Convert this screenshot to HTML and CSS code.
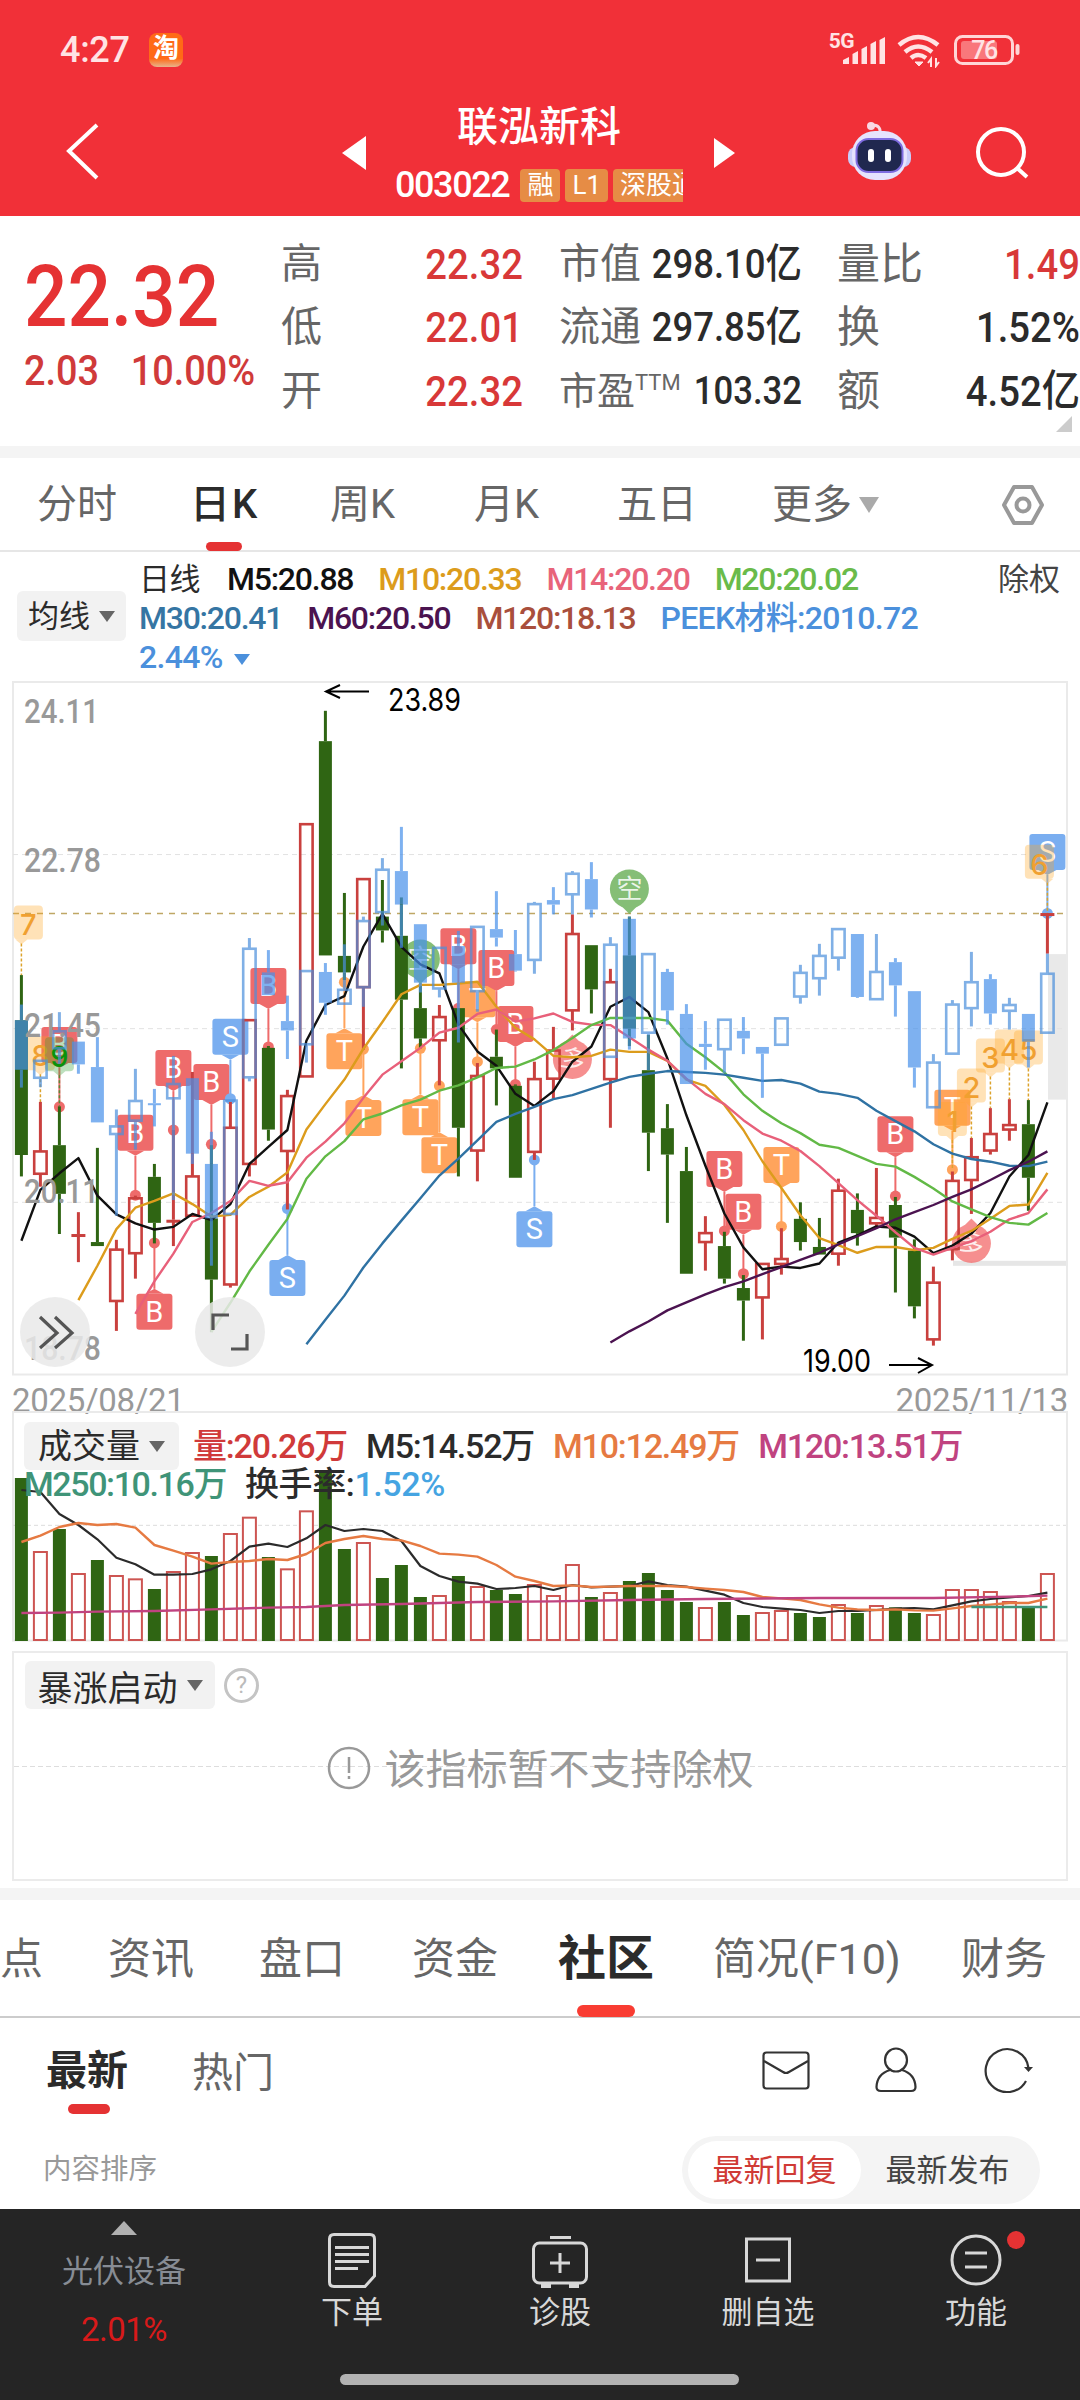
FILE: index.html
```html
<!DOCTYPE html>
<html lang="zh-CN">

<head>
    <meta charset="UTF-8">
    <meta name="viewport" content="width=device-width, initial-scale=1.0">
    <title>联泓新科 003022</title>
    <link rel="stylesheet" href="styles.css">
</head>

<body>
    <header class="header">
        <div class="status-bar">
            <span class="clock">4:27</span>
            <span class="app-icon">淘</span>
            <span class="network">5G</span>
            <svg class="signal" width="42" height="27" viewBox="0 0 42 27" fill="#ffe3e4">
                <path d="M0 27 V23 L6 20 V27z" />
                <path d="M9.500 27 V17 L15 14 V27z" />
                <path d="M18.500 27 V12 L24 9 V27z" />
                <path d="M27.500 27 V7 L33 4 V27z" />
                <path d="M36.500 27 V3 L42 0 V27z" />
            </svg>
            <svg class="wifi" width="44" height="34" viewBox="0 0 44 34" fill="none" stroke="#ffe3e4" stroke-width="4.500">
                <path d="M2 11 Q21 -5 41 11" />
                <path d="M8 18 Q21 7 35 18" />
                <path d="M14 24 Q21 18 29 24" />
                <path d="M18 28 H26 L22 32z" stroke-width="1" fill="#ffe3e4" />
                <path d="M34 33 V25 l-3 4 M39 24 V32 l3 -4" stroke-width="2" />
            </svg>
            <svg class="battery" width="66" height="31" viewBox="0 0 66 31">
                <rect x="1.500" y="1.500" width="57" height="27" rx="7" fill="none" stroke="#ffd5d6" stroke-width="3" />
                <rect x="7" y="6" width="36" height="18" rx="3" fill="#f9777b" />
                <path d="M63.500 11 v7" stroke="#ffd5d6" stroke-width="4" stroke-linecap="round" />
                <text x="30" y="23.500" text-anchor="middle" class="battery-text">76</text>
            </svg>
        </div>
        <div class="title-bar">
            <svg class="back" width="36" height="58" viewBox="0 0 36 58" fill="none" stroke="#fff" stroke-width="4">
                <path d="M32 3 L4 29 L32 56" />
            </svg>
            <svg class="prev" width="24" height="34" viewBox="0 0 24 34"><path d="M24 0 V34 L0 17z" fill="#fff" /></svg>
            <div class="stock">
                <h1>联泓新科</h1>
                <div class="stock-info">
                    <span class="code">003022</span>
                    <span class="badge">融</span>
                    <span class="badge">L1</span>
                    <span class="badge">深股通</span>
                </div>
            </div>
            <svg class="next" width="21" height="30" viewBox="0 0 21 30"><path d="M0 0 V30 L21 15z" fill="#fff" /></svg>
            <svg class="robot" width="66" height="62" viewBox="0 0 66 62">
                <path d="M33 13 q1 -8 -8 -8" fill="none" stroke="#f9d8e4" stroke-width="3" />
                <circle cx="24" cy="6" r="4" fill="#f9d8e4" />
                <rect x="1" y="27" width="63" height="20" rx="8" fill="#c9cdfa" />
                <rect x="5" y="11" width="55" height="49" rx="23" fill="#e6e3fd" />
                <rect x="9.500" y="19" width="46" height="33" rx="12" fill="#20284f" stroke="#7f6ce0" stroke-width="2" />
                <rect x="21" y="29" width="6" height="13" rx="3" fill="#fff" />
                <rect x="38" y="29" width="6" height="13" rx="3" fill="#fff" />
            </svg>
            <svg class="search" width="56" height="56" viewBox="0 0 56 56" fill="none" stroke="#fff" stroke-width="4">
                <circle cx="27" cy="27" r="23" />
                <path d="M43 43 L53 52" />
            </svg>
        </div>
    </header>

    <section class="quote">
        <div class="price">
            <div class="last">22.32</div>
            <div class="change"><span>2.03</span><span>10.00%</span></div>
        </div>
        <dl class="stats first">
            <dt>高</dt><dd class="up">22.32</dd>
            <dt>低</dt><dd class="up">22.01</dd>
            <dt>开</dt><dd class="up">22.32</dd>
        </dl>
        <dl class="stats second">
            <dt>市值</dt><dd>298.10亿</dd>
            <dt>流通</dt><dd>297.85亿</dd>
            <dt class="pe">市盈<sup>TTM</sup></dt><dd class="small">103.32</dd>
        </dl>
        <dl class="stats third">
            <dt>量比</dt><dd class="up">1.49</dd>
            <dt>换</dt><dd>1.52%</dd>
            <dt>额</dt><dd>4.52亿</dd>
        </dl>
        <span class="corner"></span>
    </section>

    <nav class="period-tabs">
        <span>分时</span>
        <span class="active">日K</span>
        <span>周K</span>
        <span>月K</span>
        <span>五日</span>
        <span>更多<i class="caret"></i></span>
        <svg width="44" height="42" viewBox="0 0 44 42" fill="none" stroke="#999" stroke-width="4">
            <path d="M13 3 H31 L41 21 L31 39 H13 L3 21z" stroke-linejoin="round" />
            <circle cx="22" cy="21" r="6.500" />
        </svg>
    </nav>

    <section class="ma-legend">
        <span class="picker">均线<i class="caret"></i></span>
        <div class="ma-rows">
            <div><span class="name">日线</span><span class="m5">M5:20.88</span><span class="m10">M10:20.33</span><span class="m14">M14:20.20</span><span class="m20">M20:20.02</span></div>
            <div><span class="m30">M30:20.41</span><span class="m60">M60:20.50</span><span class="m120">M120:18.13</span><span class="peek">PEEK材料:2010.72</span></div>
            <div><span class="peek">2.44%<i class="caret"></i></span></div>
        </div>
        <span class="adjust">除权</span>
    </section>

    <svg id="kline" width="1080" height="700" viewBox="0 0 1080 700"></svg>

    <section class="volume">
        <div class="dates"><span>2025/08/21</span><span>2025/11/13</span></div>
        <svg id="volume" width="1080" height="240" viewBox="0 0 1080 240"></svg>
        <div class="vol-legend">
            <div><span class="picker">成交量<i class="caret"></i></span><span class="vol">量:20.26万</span><span class="v5">M5:14.52万</span><span class="v10">M10:12.49万</span><span class="v120">M120:13.51万</span></div>
            <div><span class="v250">M250:10.16万</span><span class="turnover">换手率:<b>1.52%</b></span></div>
        </div>
    </section>

    <section class="indicator">
        <div class="indicator-head">
            <span class="picker">暴涨启动<i class="caret"></i></span>
            <span class="help">?</span>
        </div>
        <div class="empty">
            <svg width="44" height="44" viewBox="0 0 44 44" fill="none" stroke="#999" stroke-width="2.500">
                <circle cx="22" cy="22" r="20" />
                <path d="M22 11 V27 M22 30 V33" />
            </svg>
            <span>该指标暂不支持除权</span>
        </div>
    </section>

    <nav class="info-tabs">
        <span>点</span>
        <span>资讯</span>
        <span>盘口</span>
        <span>资金</span>
        <span class="active">社区</span>
        <span>简况(F10)</span>
        <span>财务</span>
    </nav>

    <section class="community">
        <div class="feed-tabs">
            <span class="active">最新</span>
            <span class="hot">热门</span>
            <svg class="mail" width="48" height="39" viewBox="0 0 48 39" fill="none" stroke="#333" stroke-width="2.200">
                <rect x="1.500" y="1.500" width="45" height="36" rx="3" />
                <path d="M2 10 L21 21 Q24 23 27 21 L46 10" />
            </svg>
            <svg class="person" width="42" height="46" viewBox="0 0 42 46" fill="none" stroke="#333" stroke-width="2.200">
                <ellipse cx="21" cy="13" rx="11" ry="11.500" />
                <path d="M15 23 Q2 27 1.500 40 Q1.500 44 6 44 H36 Q40.500 44 40.500 40 Q40 27 27 23" />
            </svg>
            <svg class="refresh" width="50" height="46" viewBox="0 0 50 46" fill="none" stroke="#333" stroke-width="2.200">
                <path d="M42 34 A21.500 21.500 0 1 1 44.500 21" />
                <path d="M40 20 H49 L44.500 25z" fill="#333" stroke="none" />
            </svg>
        </div>
        <div class="sort">
            <span>内容排序</span>
            <div class="switch"><span class="active">最新回复</span><span>最新发布</span></div>
        </div>
    </section>

    <footer class="toolbar">
        <div class="sector">
            <i class="caret-up"></i>
            <span>光伏设备</span>
            <b>2.01%</b>
        </div>
        <div class="tool">
            <svg width="60" height="60" viewBox="0 0 60 60" fill="none" stroke="#d8d8d8" stroke-width="3">
                <path d="M12 4.500 H48 Q52.500 4.500 52.500 9 V46 L43 56.500 H12 Q7.500 56.500 7.500 52 V9 Q7.500 4.500 12 4.500z" />
                <path d="M13 17.500 H47 M13 24.500 H47 M13 31.500 H47 M13 38.500 H36" />
            </svg>
            <span>下单</span>
        </div>
        <div class="tool">
            <svg width="60" height="60" viewBox="0 0 60 60" fill="none" stroke="#d8d8d8" stroke-width="3">
                <rect x="3.500" y="13" width="53" height="40" rx="6" />
                <path d="M20 7.500 H41 M30 23 V43 M20 33 H40" />
                <path d="M11 56 H21 M39 56 H49" stroke-width="4" />
            </svg>
            <span>诊股</span>
        </div>
        <div class="tool">
            <svg width="60" height="60" viewBox="0 0 60 60" fill="none" stroke="#d8d8d8" stroke-width="3">
                <rect x="8.500" y="9" width="43" height="42" />
                <path d="M18 30 H42" />
            </svg>
            <span>删自选</span>
        </div>
        <div class="tool">
            <svg width="60" height="60" viewBox="0 0 60 60" fill="none" stroke="#d8d8d8" stroke-width="3">
                <circle cx="30" cy="30" r="24" />
                <path d="M19 23 H41 M19 37 H41" />
            </svg>
            <span>功能</span>
            <i class="dot"></i>
        </div>
        <div class="home"></div>
    </footer>

    <script src="script.js"></script>
</body>

</html>
```
FILE: styles.css
```css
* {
    box-sizing: border-box;
}

body {
    margin: 0;
    width: 1080px;
    height: 2400px;
    overflow: hidden;
    background: #fff;
    color: #2b2b2b;
    font-family: Roboto, "Noto Sans CJK SC", sans-serif;
}

svg {
    display: block;
    flex: none;
}

i {
    font-style: normal;
}

b {
    font-weight: inherit;
}

/* header */
.header {
    height: 216px;
    background: #f13038;
    color: #fff;
}

.status-bar {
    height: 100px;
    padding: 0 60px;
    display: flex;
    align-items: center;
    color: #ffe3e4;
}

.clock {
    width: 89px;
    font-size: 36px;
    font-weight: 500;
    letter-spacing: -0.3px;
}

.app-icon {
    width: 34px;
    height: 34px;
    border-radius: 8px;
    background: linear-gradient(#ff6a16 75%, #e8b48c);
    color: #fff;
    font-size: 26px;
    font-weight: 700;
    line-height: 30px;
    text-align: center;
}

.network {
    margin-left: auto;
    margin-top: -18px;
    font-size: 21px;
    font-weight: 700;
    letter-spacing: -0.6px;
}

.signal {
    margin-left: -11px;
    margin-top: 1px;
}

.wifi {
    margin-left: 12px;
    margin-top: 2px;
}

.battery {
    margin-left: 13px;
}

.battery-text {
    font-size: 25px;
    font-weight: 500;
    fill: #ffe3e4;
    letter-spacing: -1.5px;
}

.title-bar {
    display: flex;
    height: 116px;
}

.back {
    margin: 22px 0 0 65px;
}

.prev {
    margin: 36px 0 0 241px;
}

.stock {
    width: 320px;
    height: 110px;
    margin-left: 15px;
    text-align: center;
}

.stock h1 {
    margin: 0;
    font-size: 41px;
    font-weight: 500;
    line-height: 54px;
    padding-right: 4px;
}

.stock-info {
    display: flex;
    align-items: center;
    gap: 5px;
    width: 288px;
    height: 38px;
    margin: 12px 0 0 14px;
    overflow: hidden;
}

.code {
    font-size: 36px;
    letter-spacing: -1.4px;
    margin-right: 6px;
    font-weight: 500;
}

.badge {
    flex: none;
    height: 33px;
    padding: 0 7px;
    border-radius: 4px;
    background: #e68c45;
    font-size: 26px;
    line-height: 32px;
}

.next {
    margin: 38px 0 0 13px;
}

.robot {
    margin: 20px 0 0 112px;
}

.search {
    margin: 25px 0 0 61px;
}

/* quote */
.quote {
    position: relative;
    display: flex;
    height: 242px;
    border-bottom: 12px solid #f4f4f4;
}

.price {
    width: 281px;
    padding: 38px 0 0 24px;
    color: #e53233;
}

.last {
    width: 220px;
    font-size: 86px;
    font-weight: 500;
    line-height: 86px;
    transform: scaleX(0.89);
    transform-origin: left;
}

.change {
    display: flex;
    gap: 36px;
    width: 270px;
    padding-top: 5px;
    font-size: 43px;
    line-height: 50px;
    font-weight: 500;
    color: #d03a3a;
    transform: scaleX(0.88);
    transform-origin: left;
}

.stats {
    display: grid;
    grid-template-columns: auto 1fr;
    grid-auto-rows: 63.5px;
    align-items: center;
    margin: 16px 0 0;
    height: 191px;
    font-size: 43px;
    line-height: 60px;
}

.first {
    width: 242px;
}

.second {
    width: 243px;
    margin-left: 36px;
}

.third {
    width: 243px;
    margin-left: 35px;
}

.stats dt {
    font-size: 41px;
    color: #666;
    white-space: nowrap;
}

.third dt {
    font-size: 43px;
}

.stats .pe {
    font-size: 38px;
    width: 60px;
}

.pe sup {
    font-size: 22px;
    line-height: 0;
    vertical-align: 14px;
}

.stats dd {
    margin: 0;
    text-align: right;
    font-size: 43px;
    font-weight: 500;
    white-space: nowrap;
    transform: scaleX(0.89);
    transform-origin: right;
}

.second dd {
    font-size: 41px;
    margin-left: -20px;
}

.stats .small {
    font-size: 39px;
}

.stats .up {
    color: #d83838;
}

.corner {
    position: absolute;
    right: 8px;
    bottom: 14px;
    width: 0;
    height: 0;
    border-left: 16px solid transparent;
    border-bottom: 16px solid #ccc;
}

.caret {
    display: inline-block;
    width: 0;
    height: 0;
    border: solid transparent;
    border-width: 11px 8px 0;
    border-top-color: #666;
}

/* period tabs */
.period-tabs {
    display: grid;
    grid-template-columns: 153px 140px 144px 143px 155px 229px auto;
    align-items: center;
    height: 94px;
    padding-left: 37px;
    border-bottom: 2px solid #e6e6e6;
    font-size: 40px;
    color: #666;
}

.period-tabs span {
    line-height: 94px;
    height: 93px;
    justify-self: start;
    white-space: nowrap;
}

.period-tabs .active {
    color: #2b2b2b;
    font-weight: 500;
    letter-spacing: 2px;
    display: flex;
    flex-direction: column;
}

.period-tabs .active::after {
    content: "";
    width: 36px;
    height: 9px;
    margin-top: -10px;
    margin-left: 16px;
    border-radius: 5px;
    background: #e53233;
}

.period-tabs .caret {
    border-width: 16px 10px 0;
    border-top-color: #aaa;
    margin-left: 7px;
    vertical-align: 5px;
}

.picker {
    display: inline-flex;
    align-items: center;
    justify-content: center;
    gap: 9px;
    height: 48px;
    border-radius: 6px;
    background: #f2f2f2;
    color: #2b2b2b;
    white-space: nowrap;
}

/* moving averages */
.ma-legend {
    display: flex;
    height: 128px;
    padding: 8px 20px 0 17px;
    font-size: 32px;
    line-height: 39px;
}

.ma-legend .picker {
    width: 109px;
    height: 50px;
    margin-top: 31px;
    font-size: 31px;
}

.ma-rows {
    flex: 1;
    padding-left: 13px;
    font-weight: 500;
    letter-spacing: -1.25px;
}

.ma-rows div {
    display: flex;
    height: 39px;
    gap: 25px;
}

.name {
    margin-right: 2px;
    font-size: 31px;
    font-weight: 400;
    letter-spacing: -0.5px;
}

.adjust {
    font-size: 31px;
    color: #444;
}

.m5 { color: #111; }
.m10 { color: #dc9c1c; }
.m14 { color: #e8647a; }
.m20 { color: #6abb4a; }
.m30 { color: #3575a3; }
.m60 { color: #4b1350; }
.m120 { color: #a94f3c; }

.peek {
    color: #4b90dc;
    letter-spacing: -0.7px;
}

.peek .caret {
    border-top-color: #4b90dc;
    margin-left: 11px;
    vertical-align: 3px;
}

/* volume */
.volume {
    position: relative;
    height: 269px;
}

.dates {
    display: flex;
    justify-content: space-between;
    height: 31px;
    padding: 2px 12px 0;
    font-size: 33px;
    line-height: 38px;
    color: #999;
    letter-spacing: -0.3px;
}

.vol-legend {
    position: absolute;
    left: 24px;
    top: 42px;
    font-size: 34px;
    font-weight: 500;
    letter-spacing: -1.2px;
    line-height: 38px;
}

.vol-legend div {
    display: flex;
    align-items: center;
    gap: 19px;
    height: 48px;
}

.vol-legend div + div {
    height: 28px;
}

.vol-legend .picker {
    width: 155px;
    margin-right: -5px;
    font-size: 34px;
    font-weight: 400;
    letter-spacing: 0;
}

.vol { color: #d03a3a; }
.v5 { color: #2b2b2b; }
.v10 { color: #e67a42; }
.v120 { color: #c04380; }

.v250 {
    color: #3f9478;
    letter-spacing: -1.4px;
}

.turnover {
    letter-spacing: -0.4px;
}

.turnover b { color: #45a4e2; }

/* unsupported indicator */
.indicator {
    height: 230px;
    margin: 2px 12px 7px;
    padding: 8px 11px;
    border: 2px solid #ebebeb;
    background: linear-gradient(90deg, #ddd 60%, transparent 0) 0 113px / 8px 1px repeat-x;
}

.indicator-head {
    display: flex;
    align-items: center;
    gap: 9px;
    height: 48px;
}

.indicator .picker {
    width: 190px;
    font-size: 35px;
}

.help {
    width: 35px;
    height: 35px;
    border: 3px solid #c4c4c4;
    border-radius: 50%;
    color: #bbb;
    font-size: 24px;
    line-height: 29px;
    text-align: center;
}

.empty {
    display: flex;
    justify-content: center;
    align-items: center;
    gap: 14px;
    margin-top: 29px;
    font-size: 41px;
    line-height: 56px;
    color: #999;
}

.empty span {
    padding-top: 4px;
}

/* info tabs */
.info-tabs {
    display: grid;
    grid-template-columns: 108px 151px 153px 146px 155px 248px auto;
    height: 130px;
    border-top: 12px solid #f4f4f4;
    border-bottom: 2px solid #ccc;
    font-size: 43px;
    line-height: 118px;
    color: #666;
    white-space: nowrap;
}

.info-tabs .active {
    font-size: 48px;
    font-weight: 700;
    color: #2b2b2b;
    width: 96px;
    display: flex;
    flex-direction: column;
    align-items: center;
}

.info-tabs .active::after {
    content: "";
    width: 58px;
    height: 12px;
    margin-top: -13px;
    border-radius: 6px;
    background: #f93c32;
}

/* community */
.community {
    height: 191px;
}

.feed-tabs {
    display: flex;
    align-items: center;
    height: 104px;
    padding: 0 46px;
    font-size: 41px;
    color: #666;
}

.feed-tabs .active {
    display: flex;
    flex-direction: column;
    align-items: center;
    margin-right: 64px;
    line-height: 60px;
    padding-top: 14px;
    font-weight: 700;
    color: #2b2b2b;
}

.feed-tabs .active::after {
    content: "";
    width: 42px;
    height: 10px;
    margin-top: 3px;
    margin-left: 3px;
    border-radius: 5px;
    background: #e53233;
}

.hot {
    padding-bottom: 2px;
}

.mail {
    margin-left: auto;
}

.person {
    margin-left: 65px;
}

.refresh {
    margin-left: 67px;
}

.sort {
    display: flex;
    justify-content: space-between;
    align-items: center;
    padding: 14px 40px 0 43px;
    font-size: 28.5px;
    line-height: 30px;
    color: #999;
}

.switch {
    display: flex;
    align-items: center;
    width: 358px;
    height: 68px;
    padding: 5px 6px;
    border-radius: 34px;
    background: #f4f4f4;
    font-size: 31px;
    color: #444;
}

.switch span {
    width: 173px;
    height: 58px;
    border-radius: 29px;
    line-height: 60px;
    text-align: center;
}

.switch .active {
    background: #fff;
    color: #d03a35;
}

/* toolbar */
.toolbar {
    position: relative;
    display: grid;
    grid-template-columns: 248px repeat(4, 208px);
    height: 191px;
    background: #252525;
    color: #d8d8d8;
    font-size: 31px;
}

.sector {
    display: flex;
    flex-direction: column;
    align-items: center;
    width: 248px;
    color: #878c94;
    line-height: 58px;
}

.caret-up {
    margin: 12px 0 8px;
    border: solid transparent;
    border-width: 0 13px 14px;
    border-bottom-color: #b0b0b0;
}

.sector b {
    color: #d81a1a;
    font-size: 33px;
    letter-spacing: -0.5px;
}

.tool {
    position: relative;
    display: flex;
    flex-direction: column;
    align-items: center;
    padding-top: 21px;
    line-height: 46px;
}

.dot {
    position: absolute;
    left: 135px;
    top: 22px;
    width: 18px;
    height: 18px;
    border-radius: 50%;
    background: #e53233;
}

.home {
    position: absolute;
    left: 340px;
    bottom: 15px;
    width: 399px;
    height: 11px;
    border-radius: 6px;
    background: #b3b3b3;
}

/* chart text */
.axis {
    font: 500 34px Roboto, sans-serif;
    fill: #999;
}

.mark {
    font: 400 31px Inter, sans-serif;
    fill: #000;
}

.tag-text {
    font: 400 29px Roboto, sans-serif;
    fill: #fff;
    text-anchor: middle;
}

.count {
    font: 500 29px Inter, sans-serif;
    fill: #f0a030;
    text-anchor: middle;
}

.count-green {
    fill: #0a930a;
}

.pin {
    font: 400 26px "Noto Sans CJK SC", sans-serif;
    fill: rgba(255, 255, 255, 0.85);
    text-anchor: middle;
}
```
FILE: script.js
```js
const STEP = 19;
const x = i => 21.4 + i * STEP;
const y = v => v * 700 / 1568;

// [type, high, bodyTop, bodyBottom, low], r = rise, g = fall
const candles = [
    ['g', 661, 762, 1064, 1112], ['r', 945, 1056, 1106, 1135], ['g', 955, 1042, 1151, 1241], ['r', 1192, 1241, 1246, 1304],
    ['g', 1048, 1259, 1268, 1268], ['r', 1254, 1276, 1391, 1458], ['r', 1155, 1161, 1284, 1341], ['g', 1084, 1113, 1216, 1262],
    ['r', 1008, 1209, 1213, 1268], ['r', 878, 1112, 1200, 1200], ['g', 1042, 1206, 1343, 1461], ['r', 945, 1003, 1354, 1361],
    ['r', 760, 762, 1084, 1112], ['g', 820, 824, 1007, 1032], ['r', 918, 932, 1055, 1186], ['r', 323, 323, 888, 888],
    ['g', 69, 137, 617, 617], ['g', 477, 618, 655, 672], ['r', 446, 446, 688, 828], ['g', 448, 530, 561, 588],
    ['g', 487, 573, 716, 870], ['g', 680, 735, 803, 825], ['r', 728, 755, 807, 908], ['g', 735, 735, 1003, 1112],
    ['r', 858, 887, 1054, 1123], ['g', 783, 844, 870, 953], ['g', 906, 909, 1115, 1115], ['r', 855, 894, 1057, 1075],
    ['r', 777, 830, 893, 938], ['r', 525, 569, 740, 785], ['g', 594, 594, 693, 747], ['r', 647, 677, 894, 1003],
    ['g', 530, 617, 781, 820], ['g', 795, 874, 1014, 1100], ['g', 950, 1004, 1063, 1216], ['g', 1046, 1100, 1330, 1330],
    ['r', 1201, 1239, 1259, 1323], ['g', 1236, 1268, 1341, 1352], ['g', 1333, 1362, 1390, 1480], ['r', 1307, 1308, 1383, 1477],
    ['r', 1228, 1297, 1308, 1332], ['g', 1170, 1207, 1259, 1278], ['g', 1205, 1270, 1287, 1287], ['r', 1117, 1144, 1285, 1312],
    ['g', 1150, 1187, 1239, 1267], ['r', 1093, 1205, 1217, 1225], ['g', 1158, 1176, 1249, 1372], ['g', 1253, 1278, 1403, 1430],
    ['r', 1314, 1350, 1477, 1491], ['r', 1101, 1122, 1275, 1300], ['r', 1026, 1069, 1120, 1196], ['r', 959, 1017, 1054, 1063],
    ['r', 939, 997, 1007, 1032], ['g', 941, 995, 1115, 1189], ['r', 523, 522, 527, 613]
];

// overlaid PEEK sector candles, h = hollow, f = filled
const sector = [
    ['f', 727, 762, 873, 913], ['h', 853, 853, 891, 912], ['h', 744, 787, 825, 860], ['f', 810, 810, 861, 882],
    ['f', 800, 867, 991, 991], ['h', 962, 1000, 1017, 1200], ['h', 871, 943, 987, 1052], ['f', 916, 948, 952, 1000],
    ['h', 842, 905, 937, 1165], ['f', 892, 892, 1061, 1084], ['f', 1012, 1084, 1206, 1312], ['h', 942, 942, 1196, 1196],
    ['h', 578, 602, 890, 899], ['f', 605, 655, 706, 706], ['f', 707, 764, 785, 849], ['h', 652, 652, 816, 857],
    ['f', 634, 654, 723, 750], ['h', 592, 694, 725, 725], ['h', 530, 540, 688, 732], ['h', 399, 425, 520, 550],
    ['f', 329, 428, 503, 600], ['f', 547, 547, 678, 700], ['h', 600, 600, 691, 711], ['f', 562, 596, 678, 812],
    ['h', 553, 553, 697, 743], ['f', 473, 558, 577, 597], ['f', 560, 614, 651, 653], ['h', 497, 502, 627, 658],
    ['f', 464, 493, 503, 525], ['h', 428, 434, 480, 525], ['f', 408, 446, 514, 532], ['h', 576, 593, 844, 844],
    ['f', 530, 535, 803, 828], ['h', 614, 614, 790, 874], ['f', 647, 654, 740, 772], ['f', 726, 748, 905, 905],
    ['f', 764, 815, 822, 873], ['h', 761, 761, 827, 880], ['f', 755, 786, 803, 838], ['f', 822, 822, 837, 936],
    ['h', 758, 758, 817, 817], ['h', 638, 656, 709, 725], ['h', 591, 618, 668, 707], ['h', 558, 558, 622, 651],
    ['f', 569, 569, 710, 712], ['h', 569, 654, 715, 715], ['f', 623, 632, 684, 754], ['f', 697, 697, 868, 913],
    ['h', 838, 857, 957, 957], ['h', 717, 727, 837, 837], ['h', 609, 677, 735, 776], ['f', 659, 670, 747, 772],
    ['h', 712, 728, 741, 783], ['f', 748, 748, 810, 868], ['h', 613, 658, 790, 790]
];

const averages = [
    { color: '#111', start: 0, values: [1256, 1142, 1105, 1071, 1155, 1197, 1217, 1231, 1225, 1196, 1210, 1174, 1084, 1046, 1008, 808, 728, 708, 597, 524, 598, 637, 657, 772, 832, 864, 927, 954, 921, 855, 821, 732, 710, 744, 848, 975, 1088, 1195, 1271, 1320, 1314, 1317, 1307, 1260, 1244, 1224, 1227, 1247, 1284, 1267, 1240, 1194, 1112, 1064, 946] },
    { color: '#dc9c1c', start: 3, values: [1389, 1312, 1230, 1182, 1167, 1150, 1174, 1202, 1198, 1158, 1135, 1103, 1007, 950, 895, 826, 766, 704, 683, 683, 680, 676, 732, 779, 805, 842, 845, 842, 828, 833, 833, 853, 895, 909, 952, 1008, 1078, 1138, 1199, 1250, 1266, 1283, 1270, 1270, 1277, 1272, 1252, 1234, 1207, 1178, 1175, 1104] },
    { color: '#e8607a', start: 6, values: [1420, 1347, 1285, 1214, 1194, 1167, 1122, 1133, 1125, 1070, 1034, 993, 936, 884, 854, 824, 790, 779, 748, 738, 765, 758, 747, 766, 772, 773, 800, 828, 853, 893, 927, 950, 986, 1016, 1032, 1055, 1089, 1127, 1165, 1200, 1237, 1272, 1287, 1272, 1257, 1236, 1208, 1194, 1141] },
    { color: '#62b946', start: 10, values: [1460, 1395, 1325, 1265, 1207, 1117, 1067, 1033, 984, 971, 953, 940, 920, 908, 890, 869, 866, 850, 829, 802, 773, 757, 757, 757, 763, 815, 845, 879, 928, 965, 993, 1015, 1041, 1048, 1066, 1084, 1090, 1113, 1139, 1168, 1186, 1203, 1216, 1220, 1194] },
    { color: '#2f72a3', start: 15, values: [1488, 1433, 1379, 1316, 1262, 1211, 1161, 1110, 1072, 1031, 990, 972, 956, 939, 930, 916, 902, 889, 882, 876, 878, 880, 884, 891, 898, 896, 904, 922, 927, 936, 965, 988, 1011, 1040, 1061, 1073, 1079, 1088, 1089, 1079] },
    { color: '#4b1350', start: 31, values: [1484, 1459, 1437, 1412, 1394, 1376, 1360, 1347, 1331, 1315, 1299, 1283, 1264, 1246, 1228, 1208, 1192, 1176, 1158, 1141, 1120, 1098, 1079, 1056] }
];

// [letter, index, box top, dot], box is below the candle when its top is under the dot
const tags = [
    ['B', 2, 777, 956], ['B', 6, 974, 1154], ['B', 7, 1375, 1261], ['B', 8, 829, 1008], ['B', 10, 860, 1040],
    ['S', 11, 759, 938], ['B', 13, 645, 822], ['S', 14, 1299, 1184], ['T', 17, 791, 677], ['T', 18, 941, 827],
    ['T', 21, 939, 825], ['T', 22, 1024, 909], ['B', 23, 556, 735], ['T', 24, 675, 855], ['B', 25, 605, 783],
    ['B', 26, 730, 906], ['S', 27, 1190, 1075], ['B', 37, 1055, 1234], ['B', 38, 1151, 1330], ['T', 40, 1046, 1224],
    ['B', 46, 977, 1156], ['T', 49, 918, 1097], ['S', 54, 345, 523]
];
const tagColors = { B: '#ee6b6b', S: '#7aaef0', T: '#ffa45c' };

// [text, index, box top, end of the dashed stem, x shift]
const counts = [
    ['7', 0, 505, 661, 7], ['8', 1, 798, 945, 0], ['9', 2, 800, 955, 0], ['1', 49, 945, 1097, 0], ['2', 50, 870, 1026, 0],
    ['3', 51, 803, 959, 0], ['4', 52, 783, 939, 0], ['5', 53, 785, 941, 0], ['6', 54, 369, 523, -8]
];

const line = (x1, y1, x2, y2, color, w, extra = '') =>
    `<line x1="${x1}" y1="${y1}" x2="${x2}" y2="${y2}" stroke="${color}" stroke-width="${w}" ${extra}/>`;
const rect = (rx, ry, w, h, attrs) => `<rect x="${rx}" y="${ry}" width="${w}" height="${h}" ${attrs}/>`;
const polyline = (points, color, w) =>
    `<polyline points="${points.map(p => p.join(',')).join(' ')}" fill="none" stroke="${color}" stroke-width="${w}" stroke-linejoin="round"/>`;

function hollow(cx, top, bottom, color, w, stroke) {
    return rect(cx - w / 2 + stroke / 2, top, w - stroke, Math.max(bottom - top, 2), `fill="none" stroke="${color}" stroke-width="${stroke}"`);
}

function drawCandle([type, high, top, bottom, low], i, filled, empty, wick) {
    const cx = x(i);
    const color = type === 'g' || type === 'f' ? filled : empty;
    let out = '';
    if (top > high) out += line(cx, y(high), cx, y(top), color, wick);
    if (low > bottom) out += line(cx, y(bottom), cx, y(low), color, wick);
    if (type === 'g' || type === 'f') {
        out += rect(cx - 6.5, y(top), 13, Math.max(y(bottom) - y(top), 2), `fill="${color}"`);
    } else if (bottom - top < 7) {
        out += rect(cx - 7, y(top), 14, 3, `fill="${color}"`);
    } else {
        out += hollow(cx, y(top), y(bottom), color, 15, 2.6);
    }
    return out;
}

function drawTag([letter, i, top, dot]) {
    const cx = x(i);
    const below = top > dot;
    const t = y(top);
    const edge = below ? t : t + 36;
    const tip = below ? t - 5 : t + 41;
    const color = tagColors[letter];
    return line(cx, tip, cx, y(dot), color, 2)
        + `<circle cx="${cx}" cy="${y(dot)}" r="5.5" fill="${color}"/>`
        + rect(cx - 18, t, 36, 36, `rx="3" fill="${color}"`)
        + `<path d="M${cx - 9} ${edge} L${cx} ${tip} L${cx + 9} ${edge}z" fill="${color}"/>`
        + `<text class="tag-text" x="${cx}" y="${t + 28}">${letter}</text>`;
}

function drawCount([text, i, top, end, shift]) {
    const cx = x(i) + shift;
    const t = y(top);
    const green = text === '9';
    const tint = `fill="${green ? '#2f9a2f' : '#ffa520'}" fill-opacity="0.32"`;
    return line(x(i), t + 38, x(i), y(end), green ? '#5a8a3a' : '#dca32c', 1.5, 'stroke-dasharray="3 2"')
        + rect(cx - 14.5, t, 29, 34, `rx="4" ${tint}`)
        + `<path d="M${x(i) - 6} ${t + 34} h12 l-6 5z" ${tint}/>`
        + `<text class="count${green ? ' count-green' : ''}" x="${cx}" y="${t + 30}">${text}</text>`;
}

function drawPin(text, i, center, up) {
    const cx = x(i);
    const cy = y(center);
    const color = up ? '#f47474' : '#67ae54';
    const d = up ? -1 : 1;
    return `<g opacity="0.8"><circle cx="${cx}" cy="${cy}" r="19.5" fill="${color}"/>`
        + `<path d="M${cx - 8} ${cy + d * 17} L${cx} ${cy + d * 25} L${cx + 8} ${cy + d * 17}z" fill="${color}"/>`
        + `<text class="pin" x="${cx}" y="${cy + 9}"${up ? ` transform="rotate(20 ${cx} ${cy})"` : ''}>${text}</text></g>`;
}

function drawKline() {
    let out = rect(1048, y(614), 19, y(326), 'fill="#e9e9e9"') + rect(953, y(1301), 114, 5, 'fill="#e6e6e6"');
    out += rect(13, 2, 1054, 692.5, 'fill="none" stroke="#eaeaea" stroke-width="2"');
    [391, 781, 1170].forEach(v => out += line(13, y(v), 1066, y(v), '#e2e2e2', 1, 'stroke-dasharray="5 4"'));
    out += line(13, y(523), 1066, y(523), '#bfa765', 1.6, 'stroke-dasharray="6 6"');

    out += tags.map(drawTag).join('');
    out += counts.map(drawCount).join('');
    out += drawPin('空', 21, 625, false) + drawPin('空', 32, 468, false) + drawPin('多', 29, 850, true) + drawPin('多', 50, 1262, true);
    out += candles.map((c, i) => drawCandle(c, i, '#2f6513', '#c9403e', 3)).join('');
    out += averages.map(a => polyline(a.values.map((v, k) => [x(a.start + k), y(v)]), a.color, 2.4)).join('');
    out += '<g opacity="0.7">' + sector.map((c, i) => drawCandle(c, i, '#4891eb', '#4b8fdc', 3)).join('') + '</g>';

    [['24.11', 70, 75], ['22.78', 404, 77], ['21.45', 773, 77], ['20.11', 1145, 75], ['18.78', 1497, 77]].forEach(([t, v, w]) => {
        out += `<text class="axis" x="24" y="${y(v) + 12}" textLength="${w}" lengthAdjust="spacingAndGlyphs">${t}</text>`;
    });

    out += '<path d="M369 11.5 H326 M340 5 L326 11.5 L340 18" fill="none" stroke="#000" stroke-width="2"/>';
    out += '<text class="mark" x="388" y="31" textLength="73" lengthAdjust="spacingAndGlyphs">23.89</text>';
    out += '<path d="M889 685 H932 M918 678 L932 685 L918 693" fill="none" stroke="#000" stroke-width="2"/>';
    out += '<text class="mark" x="803" y="692" textLength="68" lengthAdjust="spacingAndGlyphs">19.00</text>';

    out += '<circle cx="55" cy="652" r="35" fill="#e9e9e9" fill-opacity="0.85"/><circle cx="230" cy="652" r="35" fill="#e9e9e9" fill-opacity="0.85"/>';
    out += '<path d="M40 637 L57 653 L40 668 M55 637 L72 653 L55 668 M213 650 V635 H229 M231 669 H247 V654" fill="none" stroke="#555" stroke-width="3.2"/>';
    document.getElementById('kline').innerHTML = out;
}

// bar tops, measured down from the top of the volume pane
const volumes = [324, 546, 477, 612, 570, 618, 628, 657, 606, 549, 558, 492, 443, 561, 598, 424, 300, 537, 519, 624, 585, 681, 678, 618, 651, 660, 672, 645, 678, 585, 681, 669, 633, 609, 660, 696, 714, 696, 735, 729, 723, 729, 741, 705, 729, 708, 712, 729, 735, 660, 660, 666, 696, 710, 612];
const volume5 = [360, 366, 432, 465, 508, 563, 583, 614, 614, 612, 598, 573, 530, 521, 531, 505, 465, 483, 477, 483, 513, 588, 618, 635, 641, 657, 654, 648, 660, 645, 652, 650, 648, 634, 645, 650, 662, 674, 699, 711, 716, 720, 729, 723, 723, 720, 716, 714, 718, 706, 694, 687, 682, 678, 668];
const volume10 = [516, 497, 471, 459, 465, 462, 473, 525, 542, 560, 581, 576, 573, 567, 570, 552, 519, 507, 498, 507, 511, 528, 551, 554, 560, 585, 620, 633, 648, 646, 651, 650, 648, 648, 648, 651, 656, 660, 666, 681, 685, 690, 703, 713, 718, 720, 718, 721, 722, 715, 708, 704, 699, 699, 686];
const volume120 = [[0, 729], [2, 728], [4, 725], [7, 723], [10, 718], [13, 713], [15, 711], [17, 705], [20, 702], [24, 696], [28, 694], [32, 690], [36, 687], [42, 684], [48, 684], [52, 680], [54, 677]];

function drawVolume() {
    const vy = v => v / 3 - 41;
    let out = rect(13, 1, 1054, 228.5, 'fill="none" stroke="#eaeaea" stroke-width="2"');
    out += line(13, vy(466), 1066, vy(466), '#ddd', 1, 'stroke-dasharray="4 3"');
    volumes.forEach((v, i) => {
        out += candles[i][0] === 'g'
            ? rect(x(i) - 6.5, vy(v), 13, 230 - vy(v), 'fill="#2f6513"')
            : rect(x(i) - 6.5, vy(v), 13, 229 - vy(v), 'fill="#fff" stroke="#cd5552" stroke-width="2"');
    });
    out += polyline(volume5.map((v, i) => [x(i), vy(v)]), '#2b2b2b', 2.2);
    out += polyline(volume10.map((v, i) => [x(i), vy(v)]), '#e67a42', 2.4);
    out += polyline(volume120.map(([i, v]) => [x(i), vy(v)]), '#c04380', 2.4);
    out += polyline([[x(50), vy(711)], [x(54), vy(711)]], '#3f9478', 2.4);
    document.getElementById('volume').innerHTML = out;
}

drawKline();
drawVolume();
```
